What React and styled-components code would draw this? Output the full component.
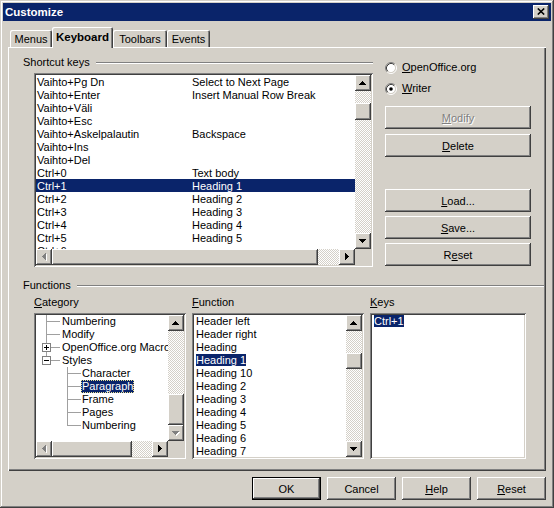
import React from "react";
import styled, { createGlobalStyle } from "styled-components";

const FACE = "#d4d0c8";
const SHADOW = "#808080";
const DARK = "#404040";
const HILITE = "#0a246a";

const GlobalStyle = createGlobalStyle`
  html, body {
    margin: 0;
    padding: 0;
    background: ${FACE};
  }
  body {
    font-family: "Liberation Sans", Arial, sans-serif;
    font-size: 11px;
    color: #000;
  }
`;

const raised = `
  background: ${FACE};
  box-shadow: inset -1px -1px ${DARK}, inset 1px 1px #fff,
    inset -2px -2px ${SHADOW}, inset 2px 2px ${FACE};
`;

const dither = `
  background: repeating-conic-gradient(${FACE} 0% 25%, #ffffff 0% 50%) 0 0 / 2px 2px;
`;

const Window = styled.div`
  width: 554px;
  height: 508px;
  box-sizing: border-box;
  padding: 3px;
  background: ${FACE};
  box-shadow: inset -1px -1px ${DARK}, inset 1px 1px ${FACE},
    inset -2px -2px ${SHADOW}, inset 2px 2px #fff;
  display: flex;
  flex-direction: column;
`;

const TitleBar = styled.div`
  height: 18px;
  flex: none;
  background: ${HILITE};
  color: #fff;
  font-weight: 700;
  font-size: 11.5px;
  display: flex;
  align-items: center;
  justify-content: space-between;
  padding: 0 2px 0 2px;
`;

const CloseBtn = styled.div`
  width: 16px;
  height: 14px;
  ${raised}
  display: flex;
  align-items: center;
  justify-content: center;
  padding-bottom: 1px;
  box-sizing: border-box;
`;

const TabStrip = styled.div`
  display: flex;
  align-items: flex-end;
  height: 20px;
  margin: 6px 5px 0;
  padding-left: 2px;
  flex: none;
`;

const Tab = styled.div`
  width: ${(p) => p.$w}px;
  height: ${(p) => (p.$active ? 21 : 17)}px;
  margin-bottom: ${(p) => (p.$active ? -1 : 0)}px;
  box-sizing: border-box;
  position: relative;
  z-index: ${(p) => (p.$active ? 1 : 0)};
  background: ${FACE};
  font-weight: ${(p) => (p.$active ? 700 : 400)};
  font-size: ${(p) => (p.$active ? 11.5 : 11)}px;
  display: flex;
  align-items: center;
  justify-content: center;
  padding-bottom: ${(p) => (p.$active ? 2 : 0)}px;
  border-radius: 2px 2px 0 0;
  box-shadow: inset 1px 1px #fff, inset -1px 0 ${DARK}, inset -2px 0 ${SHADOW};
`;

const Page = styled.div`
  margin: 0 5px;
  height: 424px;
  flex: none;
  box-sizing: border-box;
  padding: 9px 2px 0 15px;
  box-shadow: inset 1px 1px #fff, inset -1px -1px ${DARK}, inset -2px -2px ${SHADOW};
`;

const TopGrid = styled.div`
  display: grid;
  grid-template-columns: 350px 146px;
  column-gap: 12px;
  align-items: start;
`;

const GroupHead = styled.div`
  display: flex;
  align-items: center;
  gap: 6px;
  height: 13px;
  line-height: 13px;
  margin-top: ${(p) => p.$top || 0}px;
`;

const Etch = styled.div`
  flex: 1;
  height: 0;
  border-top: 1px solid ${SHADOW};
  border-bottom: 1px solid #fff;
`;

const ListBox = styled.div`
  width: ${(p) => p.$w}px;
  height: ${(p) => p.$h}px;
  margin: ${(p) => p.$margin || 0};
  box-sizing: border-box;
  padding: 2px;
  background: #fff;
  box-shadow: inset 1px 1px ${SHADOW}, inset -1px -1px #fff,
    inset 2px 2px ${DARK}, inset -2px -2px ${FACE};
  display: grid;
  grid-template-columns: minmax(0, 1fr) ${(p) => (p.$v ? "16px" : "")};
  grid-template-rows: minmax(0, 1fr) ${(p) => (p.$hz ? "16px" : "")};
`;

const ListBody = styled.div`
  overflow: hidden;
  padding-left: ${(p) => p.$pad || 0}px;
`;

const Corner = styled.div`
  background: ${FACE};
`;

const KeyRow = styled.div`
  display: grid;
  grid-template-columns: 155px 1fr;
  height: 13px;
  line-height: 15px;
  padding-left: 1px;
  white-space: nowrap;
  background: ${(p) => (p.$sel ? HILITE : "transparent")};
  color: ${(p) => (p.$sel ? "#fff" : "#000")};
`;

const ScrollV = styled.div`
  display: flex;
  flex-direction: column;
  min-height: 0;
`;

const ScrollH = styled.div`
  display: flex;
  min-width: 0;
`;

const Track = styled.div`
  flex: 1;
  display: flex;
  flex-direction: ${(p) => (p.$v ? "column" : "row")};
  ${dither}
`;

const Thumb = styled.div`
  flex: none;
  ${raised}
  ${(p) =>
    p.$v
      ? `margin-top: ${p.$at}px; height: ${p.$size}px;`
      : `margin-left: ${p.$at}px; width: ${p.$size}px;`}
`;

const ArrowBtn = styled.div`
  width: 16px;
  height: 16px;
  flex: none;
  box-sizing: border-box;
  ${raised}
  display: flex;
  align-items: center;
  justify-content: center;
`;

const SideCol = styled.div`
  display: flex;
  flex-direction: column;
  padding-top: 5px;
`;

const RadioRow = styled.div`
  display: flex;
  align-items: center;
  gap: 5px;
  height: 13px;
  line-height: 13px;
  & + & {
    margin-top: 8px;
  }
`;

const ButtonGroup = styled.div`
  display: flex;
  flex-direction: column;
  gap: ${(p) => p.$gap || 5}px;
  margin-top: ${(p) => p.$top}px;
`;

const Button = styled.div`
  width: ${(p) => p.$w || 146}px;
  height: 23px;
  box-sizing: border-box;
  display: flex;
  align-items: center;
  justify-content: center;
  background: ${FACE};
  color: ${(p) => (p.$disabled ? SHADOW : "#000")};
  text-shadow: ${(p) => (p.$disabled ? "1px 1px 0 #fff" : "none")};
  box-shadow: ${(p) =>
    p.$default
      ? `inset 0 0 0 1px #000, inset -2px -2px ${DARK}, inset 2px 2px #fff, inset -3px -3px ${SHADOW}`
      : `inset -1px -1px ${DARK}, inset 1px 1px #fff, inset -2px -2px ${SHADOW}, inset 2px 2px ${FACE}`};
`;

const U = styled.span`
  text-decoration: underline;
  text-underline-offset: 1px;
`;

const FuncGrid = styled.div`
  display: grid;
  grid-template-columns: 152px 172px 156px;
  grid-template-rows: 13px 146px;
  column-gap: 6px;
  row-gap: 4px;
  margin: 4px 0 0 11px;
`;

const ColLabel = styled.div`
  height: 13px;
  line-height: 13px;
`;

const TreeRow = styled.div`
  display: flex;
  align-items: center;
  height: 13px;
  white-space: nowrap;
`;

const Item = styled.span`
  line-height: 13px;
  padding: 0 ${(p) => (p.$pad ? 1 : 0)}px;
  background: ${(p) => (p.$sel ? HILITE : "transparent")};
  color: ${(p) => (p.$sel ? "#fff" : "#000")};
  outline: ${(p) => (p.$focus ? "1px dotted #e8e090" : "none")};
  outline-offset: -1px;
`;

const PlainRow = styled.div`
  height: 13px;
  line-height: 13px;
  white-space: nowrap;
`;

const Footer = styled.div`
  display: flex;
  justify-content: flex-end;
  gap: 6px;
  margin: 6px 5px 0;
`;

function Arrow({ dir, disabled }) {
  const v = dir === "up" || dir === "down";
  const rects = [0, 1, 2, 3].map((i) => {
    if (dir === "up") return { x: 3 - i, y: i, w: 2 * i + 1, h: 1 };
    if (dir === "down") return { x: i, y: i, w: 7 - 2 * i, h: 1 };
    if (dir === "left") return { x: i, y: 3 - i, w: 1, h: 2 * i + 1 };
    return { x: i, y: i, w: 1, h: 7 - 2 * i };
  });
  const w = v ? 7 : 4;
  const h = v ? 4 : 7;
  return (
    <svg width={w + 1} height={h + 1} shapeRendering="crispEdges">
      {disabled &&
        rects.map((r, k) => (
          <rect key={"s" + k} x={r.x + 1} y={r.y + 1} width={r.w} height={r.h} fill="#fff" />
        ))}
      {rects.map((r, k) => (
        <rect key={k} x={r.x} y={r.y} width={r.w} height={r.h} fill={disabled ? SHADOW : "#000"} />
      ))}
    </svg>
  );
}

function VBar({ at, size, upOff, downOff }) {
  return (
    <ScrollV>
      <ArrowBtn>
        <Arrow dir="up" disabled={upOff} />
      </ArrowBtn>
      <Track $v>
        <Thumb $v $at={at} $size={size} />
      </Track>
      <ArrowBtn>
        <Arrow dir="down" disabled={downOff} />
      </ArrowBtn>
    </ScrollV>
  );
}

function HBar({ at, size, leftOff, rightOff }) {
  return (
    <ScrollH>
      <ArrowBtn>
        <Arrow dir="left" disabled={leftOff} />
      </ArrowBtn>
      <Track>
        <Thumb $at={at} $size={size} />
      </Track>
      <ArrowBtn>
        <Arrow dir="right" disabled={rightOff} />
      </ArrowBtn>
    </ScrollH>
  );
}

function Radio({ checked }) {
  return (
    <svg width="12" height="12" viewBox="0 0 12 12">
      <circle cx="6" cy="6" r="4.2" fill="#fff" />
      <path d="M2.11 9.89A5.5 5.5 0 0 1 9.89 2.11" fill="none" stroke={SHADOW} />
      <path d="M9.89 2.11A5.5 5.5 0 0 1 2.11 9.89" fill="none" stroke="#fff" />
      <path d="M2.82 9.18A4.5 4.5 0 0 1 9.18 2.82" fill="none" stroke={DARK} />
      <path d="M9.18 2.82A4.5 4.5 0 0 1 2.82 9.18" fill="none" stroke={FACE} />
      {checked && <circle cx="6" cy="6" r="1.8" fill="#000" />}
    </svg>
  );
}

const LINE = "#a0a0a0";

// connector lines for the category tree
function TreeGuide({ level, last, expander }) {
  const w = level === 1 ? 25 : 45;
  const vx = level === 1 ? 10.5 : 31.5;
  const hx = level === 1 ? 10 : 31;
  return (
    <svg width={w} height="13" shapeRendering="crispEdges" style={{ flex: "none" }}>
      <line x1={vx} y1="0" x2={vx} y2={last ? 6.5 : 13} stroke={LINE} />
      <line x1={hx} y1="6.5" x2={hx + 14} y2="6.5" stroke={LINE} />
      {expander && (
        <g>
          <rect x="6.5" y="2.5" width="8" height="8" fill="#fff" stroke={SHADOW} />
          <line x1="8" y1="6.5" x2="13" y2="6.5" stroke="#000" />
          {expander === "plus" && <line x1="10.5" y1="4" x2="10.5" y2="9" stroke="#000" />}
        </g>
      )}
    </svg>
  );
}

const shortcuts = [
  ["Vaihto+Pg Dn", "Select to Next Page"],
  ["Vaihto+Enter", "Insert Manual Row Break"],
  ["Vaihto+Väli", ""],
  ["Vaihto+Esc", ""],
  ["Vaihto+Askelpalautin", "Backspace"],
  ["Vaihto+Ins", ""],
  ["Vaihto+Del", ""],
  ["Ctrl+0", "Text body"],
  ["Ctrl+1", "Heading 1"],
  ["Ctrl+2", "Heading 2"],
  ["Ctrl+3", "Heading 3"],
  ["Ctrl+4", "Heading 4"],
  ["Ctrl+5", "Heading 5"],
  ["Ctrl+6", ""],
];

const categories = [
  { label: "Numbering", level: 1 },
  { label: "Modify", level: 1 },
  { label: "OpenOffice.org Macro", level: 1, expander: "plus" },
  { label: "Styles", level: 1, expander: "minus", last: true },
  { label: "Character", level: 2 },
  { label: "Paragraph", level: 2, sel: true },
  { label: "Frame", level: 2 },
  { label: "Pages", level: 2 },
  { label: "Numbering", level: 2, last: true },
];

const functions = [
  "Header left",
  "Header right",
  "Heading",
  "Heading 1",
  "Heading 10",
  "Heading 2",
  "Heading 3",
  "Heading 4",
  "Heading 5",
  "Heading 6",
  "Heading 7",
];

export default function App() {
  return (
    <>
      <GlobalStyle />
      <Window>
        <TitleBar>
          <span>Customize</span>
          <CloseBtn>
            <svg width="8" height="7" viewBox="0 0 8 7">
              <path d="M0.8 0.5L7.2 6.5M7.2 0.5L0.8 6.5" stroke="#000" strokeWidth="1.6" />
            </svg>
          </CloseBtn>
        </TitleBar>

        <TabStrip>
          <Tab $w={42}>Menus</Tab>
          <Tab $w={61} $active>
            Keyboard
          </Tab>
          <Tab $w={54}>Toolbars</Tab>
          <Tab $w={43}>Events</Tab>
        </TabStrip>

        <Page>
          <TopGrid>
            <div>
              <GroupHead>
                <span>Shortcut keys</span>
                <Etch />
              </GroupHead>
              <ListBox $w={339} $h={194} $margin="4px 0 0 11px" $v $hz>
                <ListBody>
                  {shortcuts.map(([k, f], i) => (
                    <KeyRow key={i} $sel={k === "Ctrl+1"}>
                      <span>{k}</span>
                      <span>{f}</span>
                    </KeyRow>
                  ))}
                </ListBody>
                <VBar at={12} size={17} />
                <HBar at={0} size={266} leftOff />
                <Corner />
              </ListBox>
            </div>

            <SideCol>
              <RadioRow>
                <Radio />
                <span>
                  <U>O</U>penOffice.org
                </span>
              </RadioRow>
              <RadioRow>
                <Radio checked />
                <span>
                  <U>W</U>riter
                </span>
              </RadioRow>
              <ButtonGroup $top={11}>
                <Button $disabled>
                  <span>
                    <U>M</U>odify
                  </span>
                </Button>
                <Button>
                  <span>
                    <U>D</U>elete
                  </span>
                </Button>
              </ButtonGroup>
              <ButtonGroup $top={32} $gap={4}>
                <Button>
                  <span>
                    <U>L</U>oad...
                  </span>
                </Button>
                <Button>
                  <span>
                    <U>S</U>ave...
                  </span>
                </Button>
                <Button>
                  <span>
                    R<U>e</U>set
                  </span>
                </Button>
              </ButtonGroup>
            </SideCol>
          </TopGrid>

          <GroupHead $top={12}>
            <span>Functions</span>
            <Etch />
          </GroupHead>

          <FuncGrid>
            <ColLabel>
              <U>C</U>ategory
            </ColLabel>
            <ColLabel>
              <U>F</U>unction
            </ColLabel>
            <ColLabel>
              <U>K</U>eys
            </ColLabel>

            <ListBox $w={152} $h={146} $v $hz>
              <ListBody>
                {categories.map((c, i) => (
                  <TreeRow key={i}>
                    <TreeGuide level={c.level} last={c.last} expander={c.expander} />
                    <Item $pad $sel={c.sel} $focus={c.sel}>
                      {c.label}
                    </Item>
                  </TreeRow>
                ))}
              </ListBody>
              <VBar at={63} size={31} downOff />
              <HBar at={0} size={80} leftOff />
              <Corner />
            </ListBox>

            <ListBox $w={172} $h={146} $v>
              <ListBody $pad={2}>
                {functions.map((f, i) => (
                  <PlainRow key={i}>
                    <Item $sel={f === "Heading 1"}>{f}</Item>
                  </PlainRow>
                ))}
              </ListBody>
              <VBar at={22} size={16} />
            </ListBox>

            <ListBox $w={156} $h={146}>
              <ListBody $pad={2}>
                <PlainRow>
                  <Item $sel>Ctrl+1</Item>
                </PlainRow>
              </ListBody>
            </ListBox>
          </FuncGrid>
        </Page>

        <Footer>
          <Button $w={69} $default>
            OK
          </Button>
          <Button $w={69}>Cancel</Button>
          <Button $w={69}>
            <span>
              <U>H</U>elp
            </span>
          </Button>
          <Button $w={69}>
            <span>
              <U>R</U>eset
            </span>
          </Button>
        </Footer>
      </Window>
    </>
  );
}
